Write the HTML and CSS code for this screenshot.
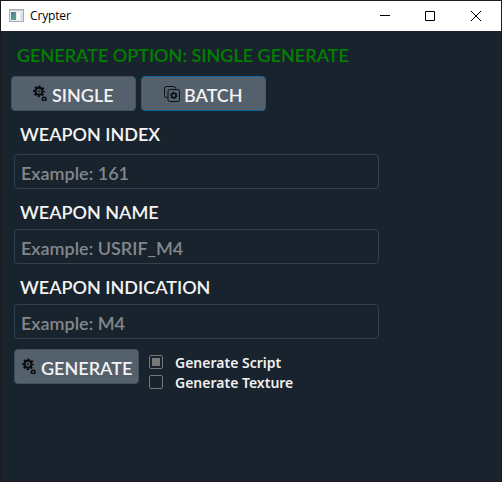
FILE: index.html
```
<!DOCTYPE html>
<html lang="en">
<head>
<meta charset="utf-8">
<title>Crypter</title>
<link rel="stylesheet" href="styles.css">
</head>
<body>
<svg width="0" height="0" class="defs">
  <symbol id="gears" viewBox="0 0 16 16">
    <g fill="none" stroke="#080b0d">
      <circle cx="7" cy="6.3" r="3.5" stroke-width="2"/>
      <circle cx="7" cy="6.3" r="5" stroke-width="1.8" stroke-dasharray="2.1 1.827" stroke-dashoffset="1.05"/>
      <circle cx="7" cy="6.3" r="1" stroke-width=".7"/>
      <circle cx="12.2" cy="14.1" r="1.7" stroke-width="1.4"/>
      <circle cx="12.2" cy="14.1" r="2.4" stroke-width=".8" stroke-dasharray="1 .885"/>
    </g>
  </symbol>
</svg>
<div class="window">
  <header class="titlebar">
    <svg class="appicon" width="16" height="14" viewBox="0 0 16 14">
      <defs><linearGradient id="pane" x1="0" y1="0" x2=".6" y2="1"><stop offset="0" stop-color="#5673a5"/><stop offset="1" stop-color="#54a58a"/></linearGradient></defs>
      <path fill="#a9adb1" d="M0 0h15v13H0z"/>
      <path fill="#e9edf0" d="M1 2h13v10H1z"/>
      <path fill="#c9ccd0" d="M1 1h13v1H1z"/>
      <path fill="url(#pane)" d="M2 3h5v8H2z"/>
      <path fill="#f8fafa" d="M8 3h3v8H8z"/>
      <path fill="#d5dfe2" d="M12 3h2v8h-2z"/>
    </svg>
    <span class="title">Crypter</span>
    <svg class="controls" width="102" height="10" viewBox="0 0 102 10" fill="none" stroke="#000">
      <path d="M0 4.5h10M45.5.5h9v9h-9z"/>
      <path d="M91 0l10 10M101 0L91 10"/>
    </svg>
  </header>
  <main class="content">
    <h1 class="option"><span>GENERATE OPTION: SINGLE GENERATE</span></h1>
    <div class="modes">
      <button class="btn single"><svg class="icon" width="16" height="18"><use href="#gears" width="16" height="16"/></svg><span>SINGLE</span></button>
      <button class="btn batch focus"><svg class="icon" width="16" height="16" viewBox="0 0 16 16" fill="none" stroke="#0b0f12">
        <path d="M3.5 11.5h-1a2 2 0 0 1-2-2v-7a2 2 0 0 1 2-2h7a2 2 0 0 1 2 2"/>
        <rect x="4" y="3.5" width="11.5" height="12" rx="1.8"/>
        <circle cx="9.8" cy="9.5" r="2.2" stroke-width="1.6"/>
        <circle cx="9.8" cy="9.5" r="3.3" stroke-width="1" stroke-dasharray="1.8 1.656"/>
      </svg><span>BATCH</span></button>
    </div>
    <form class="form">
      <label class="label l1" for="index">WEAPON INDEX</label>
      <div class="field f1" id="index">Example: 161</div>
      <label class="label l2" for="name">WEAPON NAME</label>
      <div class="field f2" id="name">Example: USRIF_M4</div>
      <label class="label l3" for="indication">WEAPON INDICATION</label>
      <div class="field f3" id="indication">Example: M4</div>
      <div class="actions">
        <button type="button" class="btn generate"><svg class="icon" width="16" height="18"><use href="#gears" width="16" height="16"/></svg><span>GENERATE</span></button>
        <div class="checks">
          <div class="check"><i class="box on"></i><span class="c1">Generate Script</span></div>
          <div class="check"><i class="box"></i><span class="c2">Generate Texture</span></div>
        </div>
      </div>
    </form>
  </main>
</div>
</body>
</html>
```
FILE: styles.css
```
* { box-sizing: border-box; }
body { margin: 0; font-family: Lato, "Liberation Sans", sans-serif; }
.defs { display: block; height: 0; }
.window { width: 502px; height: 482px; border: 1px solid #1e1c1f; background: #19232d; overflow: hidden; }
.titlebar { display: flex; align-items: center; height: 30px; padding: 0 19px 0 8px; background: #fff; }
.appicon { margin-top: -1px; }
.title { margin-left: 5px; font: 12px/16px "Open Sans", "Noto Sans", sans-serif; color: #000; letter-spacing: -.15px; }
.controls { margin-left: auto; }
.content { padding: 8px 10px; }
.option { margin: 0; height: 37px; padding-left: 6px; font-size: 18px; font-weight: 600; line-height: 33px; color: #008000; white-space: nowrap; }
.modes { display: flex; gap: 5px; }
.btn { display: flex; align-items: center; width: 125px; height: 35px; padding: 0; border: 1px solid #455364; border-color: #43515c; border-radius: 4px; background: #54606b; color: #f2f2f2; font: 600 18px/20px Lato, sans-serif; white-space: nowrap; }
.btn span { margin-top: 3px; }
.icon { flex: none; overflow: visible; }
.single { padding-left: 20px; }
.single span, .generate span, .batch span { margin-left: 4px; }
.batch { padding-left: 22px; }
.focus { border-color: #1464a0; }
.form { padding: 0 3px; }
.label { display: block; height: 40px; padding: 3px 0 0 6px; font-size: 18px; font-weight: 600; line-height: 40px; color: #f4f4f4; }
.l1 { height: 43px; }
.field { height: 35px; width: 365px; padding: 2px 6px 0; border: 1px solid #32414b; border-radius: 4px; font-size: 18px; font-weight: 600; line-height: 32px; color: #83878b; }
.actions { display: flex; gap: 10px; margin-top: 10px; }
.generate { padding-left: 6px; }
.checks { padding-top: 4px; }
.check { display: flex; align-items: center; gap: 12px; height: 20px; font: 600 14px/20px "Noto Sans", "Open Sans", sans-serif; color: #f0f0f0; white-space: nowrap; }
.box { display: block; width: 14px; height: 14px; margin-top: -2px; border: 1px solid #787878; border-radius: 2px; }
.on { background: #787878; background-clip: content-box; padding: 2px; }
```
